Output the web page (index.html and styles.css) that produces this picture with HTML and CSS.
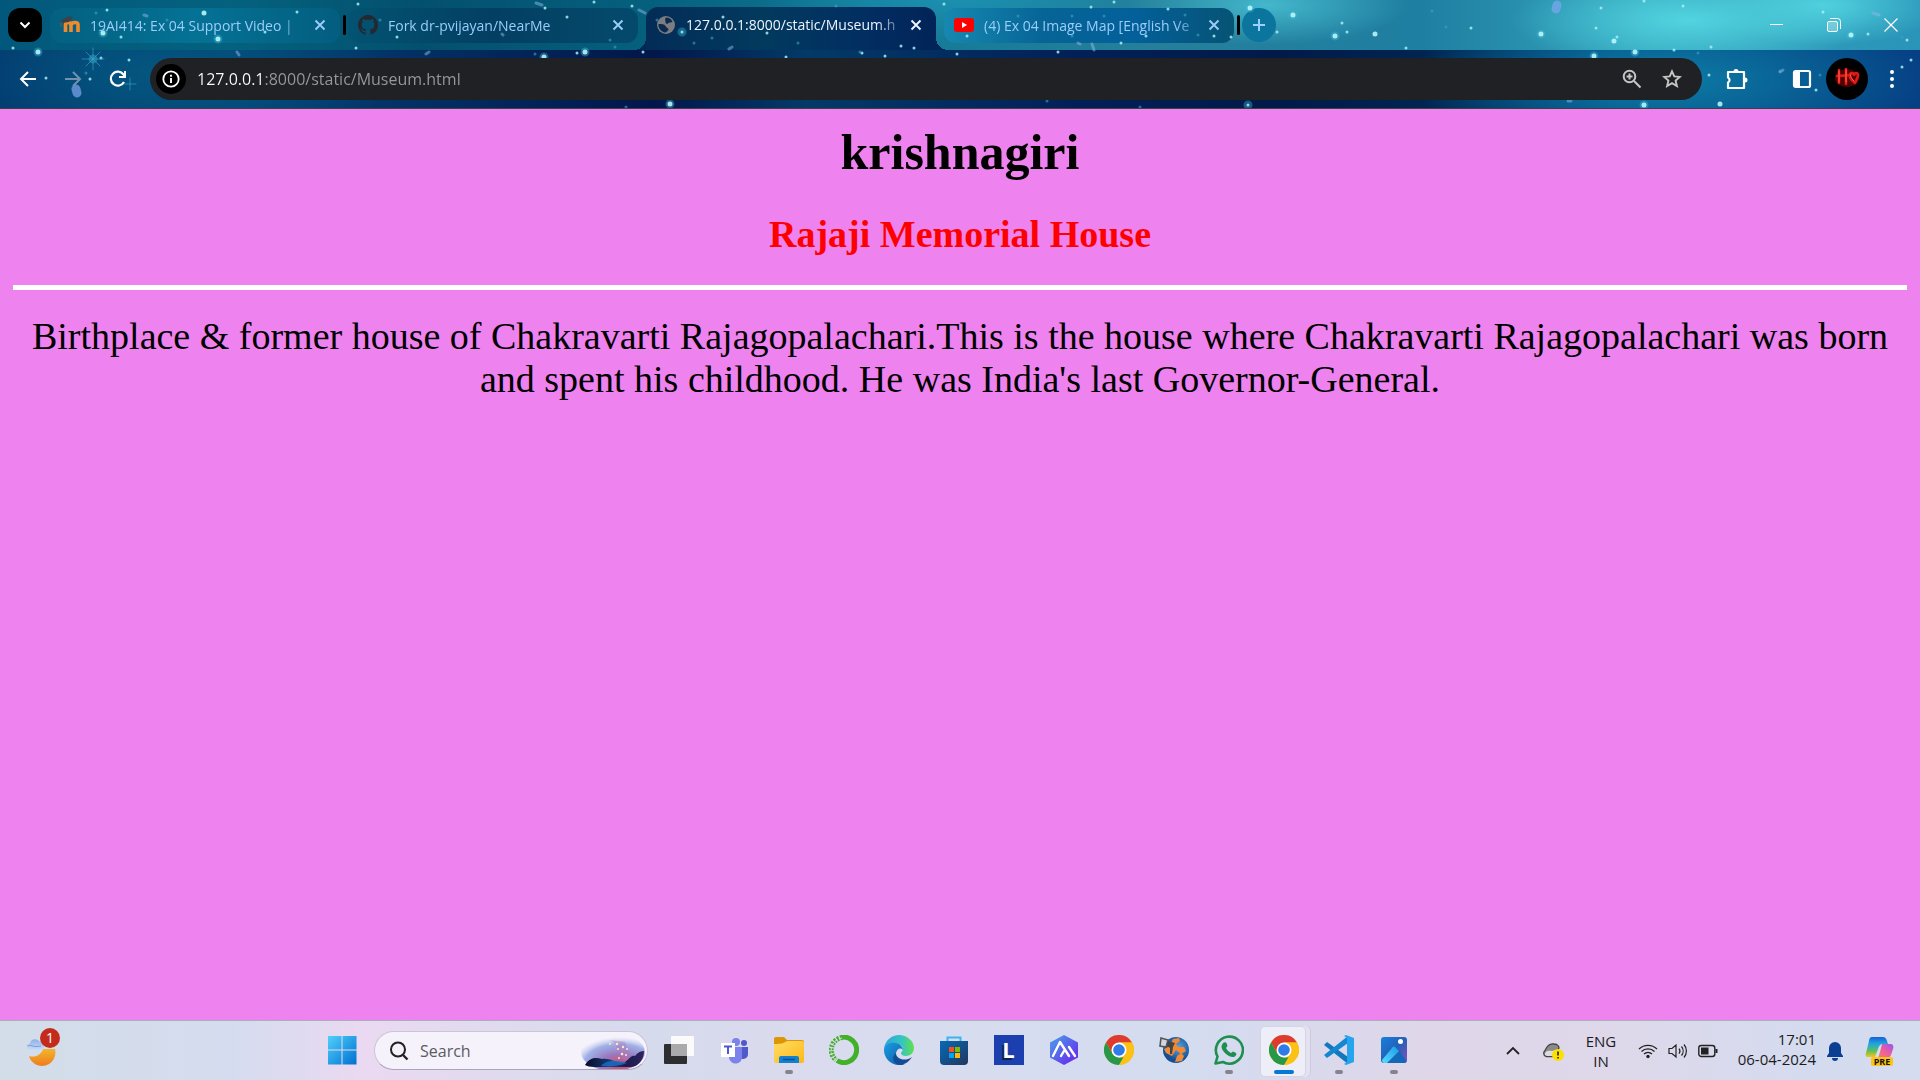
FILE: index.html
```html
<!DOCTYPE html>
<html lang="en">
<head>
<meta charset="utf-8">
<meta name="viewport" content="width=device-width, initial-scale=1">
<title>127.0.0.1:8000/static/Museum.html</title>
<link rel="stylesheet" href="styles.css">
</head>
<body>
<svg class="defs" aria-hidden="true">
  <defs>
    <linearGradient id="win" x1="0" y1="0" x2="1" y2="1"><stop offset="0" stop-color="#4fd0fb"/><stop offset="1" stop-color="#0070d0"/></linearGradient>
    <linearGradient id="moon" x1="0" y1="0" x2="0" y2="1"><stop offset="0" stop-color="#f2b52c"/><stop offset="1" stop-color="#ef7d1d"/></linearGradient>
    <linearGradient id="cloud" x1="0" y1="0" x2="0" y2="1"><stop offset="0" stop-color="#8fb0ea"/><stop offset="1" stop-color="#cfe0f8"/></linearGradient>
    <linearGradient id="folder" x1="0" y1="0" x2="1" y2="1"><stop offset="0" stop-color="#ffdc68"/><stop offset="1" stop-color="#fdb913"/></linearGradient>
    <linearGradient id="edgeA" x1="0" y1="0" x2="1" y2="0"><stop offset="0" stop-color="#2aa5dc"/><stop offset=".6" stop-color="#35c5c0"/><stop offset="1" stop-color="#62e04a"/></linearGradient>
    <linearGradient id="edgeB" x1="0" y1="0" x2="1" y2="1"><stop offset="0" stop-color="#1b9de2"/><stop offset="1" stop-color="#0c59a4"/></linearGradient>
    <linearGradient id="store" x1="0" y1="0" x2="1" y2="1"><stop offset="0" stop-color="#0669b8"/><stop offset="1" stop-color="#22375c"/></linearGradient>
    <linearGradient id="hex" x1="0" y1="0" x2="1" y2="1"><stop offset="0" stop-color="#4aa3e8"/><stop offset="1" stop-color="#6a1df0"/></linearGradient>
    <linearGradient id="photo" x1="0" y1="0" x2="1" y2="1"><stop offset="0" stop-color="#1482dc"/><stop offset=".5" stop-color="#2560b8"/><stop offset="1" stop-color="#8a4fc0"/></linearGradient>
    <linearGradient id="peak" x1="0" y1="1" x2="1" y2="0"><stop offset="0" stop-color="#58dcff"/><stop offset="1" stop-color="#1a9be8"/></linearGradient>
    <radialGradient id="globe" cx=".6" cy=".4"><stop offset="0" stop-color="#5aa5e0"/><stop offset="1" stop-color="#144f94"/></radialGradient>
    <linearGradient id="copA" x1="0" y1="0" x2="0" y2="1"><stop offset="0" stop-color="#1a5fd8"/><stop offset=".35" stop-color="#1fa8e0"/><stop offset=".7" stop-color="#5fc05a"/><stop offset="1" stop-color="#f5c518"/></linearGradient>
    <linearGradient id="copB" x1="0" y1="1" x2="1" y2="0"><stop offset="0" stop-color="#f7825a"/><stop offset=".5" stop-color="#ec5f9e"/><stop offset="1" stop-color="#9a55ee"/></linearGradient>
    <radialGradient id="dusk" cx=".6" cy=".85" r=".75"><stop offset="0" stop-color="#e0485a"/><stop offset=".4" stop-color="#9a78c0"/><stop offset=".75" stop-color="#8aa0e0" stop-opacity=".8"/><stop offset="1" stop-color="#c0c8f0" stop-opacity="0"/></radialGradient>
    <linearGradient id="hill" x1="0" y1="0" x2="1" y2="0"><stop offset="0" stop-color="#0a0a26"/><stop offset=".45" stop-color="#13407e"/><stop offset=".7" stop-color="#1a1c50"/><stop offset="1" stop-color="#30245c"/></linearGradient>
    <symbol id="chrome" viewBox="0 0 30 30">
      <circle cx="15" cy="15" r="15" fill="#fbc116"/>
      <path d="M2 7.500A15 15 0 0 1 28 7.500H15L8.500 18.750z" fill="#df3a2f"/>
      <path d="M2 7.500L8.500 18.750L15 22.500H21.500L15 30A15 15 0 0 1 2 7.500z" fill="#279847"/>
      <path d="M15 7.500H28A15 15 0 0 1 15 30L21.500 18.750z" fill="#fbc116"/>
      <circle cx="15" cy="15" r="7.500" fill="#fff"/><circle cx="15" cy="15" r="5.800" fill="#2f7be8"/>
    </symbol>
    <symbol id="cross" viewBox="0 0 14 14"><path d="M2.500 2.500l9 9M11.500 2.500l-9 9" stroke="currentColor" stroke-width="1.900" fill="none"/></symbol>
  </defs>
</svg>

<header class="browser">
  <svg class="stars" viewBox="0 0 1920 108" preserveAspectRatio="xMidYMid slice" aria-hidden="true">
    <g fill="none" stroke-linecap="round">
      <path class="glow" d="M38 52h0M103 33h0M544 57h0M585 52h0M1250 8h0M1335 36h0M1541 34h0M1614 41h0M1594 56h0M1635 52h0M1644 105h0M218 39h0M93 59h0M670 104h0M1248 105h0M1851 35h0M1293 15h0M682 32h0"/>
      <path class="star big" d="M38 52h0M103 33h0M544 57h0M585 52h0M1250 8h0M1335 36h0M1541 34h0M1614 41h0M1594 56h0M1635 52h0M1644 105h0M218 39h0M204 13h0M1293 15h0M1375 34h0M670 104h0M1851 35h0M1720 104h0"/>
      <path class="star" d="M107 10h0M297 12h0M121 37h0M13 48h0M129 60h0M101 58h0M90 79h0M46 78h0M265 32h0M356 48h0M397 37h0M358 4h0M594 2h0M545 8h0M567 17h0M632 6h0M577 53h0M643 52h0M682 32h0M723 17h0M767 33h0M786 57h0M862 53h0M901 46h0M914 48h0M885 56h0M944 4h0M957 54h0M1114 2h0M1091 7h0M1168 9h0M1277 32h0M1342 23h0M1347 32h0M1406 48h0M1214 36h0M1231 37h0M1146 36h0M1121 43h0M967 36h0M1058 52h0M1248 105h0M1471 28h0M1601 8h0M1617 37h0M1596 28h0M1644 1h0M1683 6h0M1711 47h0M1823 12h0M1868 34h0M1907 40h0M1674 50h0M1709 75h0M1816 90h0M1911 60h0M1902 67h0"/>
      <path class="star dim" d="M167 20h0M380 20h0M610 40h0M615 47h0M657 20h0M712 38h0M694 43h0M836 6h0M626 107h0M1072 16h0M1072 36h0M1185 15h0M1198 35h0M1432 11h0M1446 27h0M1698 53h0M1820 75h0M1902 37h0M1047 101h0M1140 107h0M86 73h0M1018 16h0M1104 16h0M96 13h0M1780 71h0M535 54h0M860 52h0M798 43h0"/>
      <path class="petal" d="M144 15l3 1M502 34l1 1M639 10l6 3M729 49l3-2M1092 44l2 6M1873 13l6 2M1780 72l3-2M1078 43l2 1M536 3l6 2M237 52l2 3M426 54l3-2M1568 101l3 0"/>
      <path class="petal wide" d="M76 89l1 4M1557 5l-1 4"/>
      <path class="burst" d="M93 48v22M82 59h22M86 52l14 14M100 52l-14 14M130 78v12M124 84h12"/>
    </g>
  </svg>

  <div class="tabstrip">
    <button class="tab-search" aria-label="Search tabs"><svg width="14" height="14" viewBox="0 0 14 14"><path d="M2.500 4.500L7 9l4.500-4.500" fill="none" stroke="#fff" stroke-width="2"/></svg></button>
    <div class="tab teal">
      <svg class="favicon" viewBox="0 0 20 20"><path d="M5.500 17V9.500q0-2 2.500-2t3 2V17M11.500 9.500q.5-2 3.500-2t3 2V17" fill="none" stroke="#f08a2a" stroke-width="3.600"/><path d="M0 6l9-5 4 2-4 4-7 1z" fill="#3d4248"/><path d="M1 7v5" stroke="#6b5a4a"/></svg>
      <span class="tab-title">19AI414: Ex 04 Support Video |</span>
      <button class="close" aria-label="Close tab"><svg width="14" height="14"><use href="#cross"/></svg></button>
    </div>
    <i class="divider"></i>
    <div class="tab shade">
      <svg class="favicon" viewBox="0 0 16 16"><path fill="#24292f" d="M8 0C3.580 0 0 3.580 0 8c0 3.540 2.290 6.530 5.470 7.590.4.070.55-.17.55-.38 0-.19-.01-.82-.01-1.490-2.010.37-2.530-.49-2.690-.94-.09-.23-.48-.94-.82-1.130-.28-.15-.68-.52-.01-.53.63-.01 1.080.58 1.230.82.72 1.210 1.870.87 2.330.66.070-.52.28-.87.51-1.070-1.780-.2-3.640-.89-3.640-3.950 0-.87.31-1.590.82-2.150-.08-.2-.36-1.020.08-2.120 0 0 .67-.21 2.200.82.64-.18 1.320-.27 2-.27s1.360.09 2 .27c1.530-1.040 2.200-.82 2.200-.82.44 1.100.16 1.920.08 2.120.51.56.82 1.270.82 2.150 0 3.070-1.870 3.750-3.650 3.950.29.25.54.73.54 1.480 0 1.070-.01 1.930-.01 2.200 0 .21.15.46.55.38A8.010 8.010 0 0 0 16 8c0-4.420-3.580-8-8-8z"/></svg>
      <span class="tab-title">Fork dr-pvijayan/NearMe</span>
      <button class="close" aria-label="Close tab"><svg width="14" height="14"><use href="#cross"/></svg></button>
    </div>
    <i class="divider blank"></i>
    <div class="tab active">
      <svg class="favicon" viewBox="0 0 20 20"><circle cx="10" cy="10" r="9" fill="#7b7d80"/><path d="M2.500 9c3 0 6 0 7 2s3 2 3 4c-1 1-2 2-3 2.500C5 17 2 13 2.500 9zM10 2.500c3 0 5 1.500 6.500 4-1 1.500-3 .5-4 1.500-1 1.500-3 1-3-1s-1-3 .5-4.500z" fill="#0b2a50"/></svg>
      <span class="tab-title">127.0.0.1:8000/static/Museum.h</span>
      <button class="close" aria-label="Close tab"><svg width="14" height="14"><use href="#cross"/></svg></button>
    </div>
    <i class="divider blank"></i>
    <div class="tab blue">
      <svg class="favicon" viewBox="0 0 20 20"><rect y="3" width="20" height="14" rx="3" fill="#f00"/><path d="M8 7v6l5-3z" fill="#fff"/></svg>
      <span class="tab-title">(4) Ex 04 Image Map [English Ve</span>
      <button class="close" aria-label="Close tab"><svg width="14" height="14"><use href="#cross"/></svg></button>
    </div>
    <i class="divider"></i>
    <button class="new-tab" aria-label="New tab"><svg width="14" height="14" viewBox="0 0 14 14"><path d="M7 1v12M1 7h12" stroke="#9bd0ff" stroke-width="2"/></svg></button>
    <div class="window-controls">
      <button aria-label="Minimize"><svg width="14" height="14" viewBox="0 0 14 14"><path d="M0 6.500h13" stroke="#fff"/></svg></button>
      <button aria-label="Restore"><svg width="14" height="14" viewBox="0 0 14 14"><rect x=".5" y="3.500" width="10" height="10" rx="1.500" fill="#fff" fill-opacity=".25" stroke="#fff"/><path d="M3 .5h7.500a3 3 0 0 1 3 3V11" fill="none" stroke="#fff"/></svg></button>
      <button aria-label="Close window"><svg width="14" height="14" viewBox="0 0 14 14"><path d="M.5.5l13 13M13.500.5l-13 13" stroke="#fff" stroke-width="1.200"/></svg></button>
    </div>
  </div>

  <div class="toolbar">
    <button class="nav" aria-label="Back"><svg width="18" height="18" viewBox="0 0 18 18"><path d="M17 9H2.500M9 2L2 9l7 7" fill="none" stroke="#fff" stroke-width="2"/></svg></button>
    <button class="nav" aria-label="Forward" disabled><svg width="18" height="18" viewBox="0 0 18 18"><path d="M1 9h14.500M9 2l7 7-7 7" fill="none" stroke="#7291ae" stroke-width="2"/></svg></button>
    <button class="nav" aria-label="Reload"><svg width="18" height="18" viewBox="0 0 18 18"><path d="M15 12A7 7 0 1 1 14.500 4.500L16 6.500" fill="none" stroke="#fff" stroke-width="2.200"/><path d="M17 1v7h-7V6h5V1z" fill="#fff"/></svg></button>
    <form class="omnibox">
      <button type="button" class="site-info" aria-label="View site information"><svg width="18" height="18" viewBox="0 0 18 18"><circle cx="9" cy="9" r="7.700" fill="none" stroke="#fff" stroke-width="1.800"/><path d="M9 8v5M9 4.800v2" stroke="#fff" stroke-width="1.900"/></svg></button>
      <input class="address" type="text" aria-label="Address" value="127.0.0.1:8000/static/Museum.html">
      <button type="button" class="omni-action" aria-label="Zoom"><svg width="20" height="20" viewBox="0 0 20 20"><g fill="none" stroke="#c4c7c5" stroke-width="2"><circle cx="7.500" cy="7.500" r="5.800"/><path d="M12 12l6.500 6.500M4.500 7.500h6M7.500 4.500v6"/></g></svg></button>
      <button type="button" class="omni-action" aria-label="Bookmark this tab"><svg width="20" height="20" viewBox="0 0 20 20"><path d="M10 2.300l2.300 5.100 5.500.5-4.200 3.700 1.300 5.500L10 14.200l-4.900 2.900 1.300-5.500-4.200-3.700 5.500-.5z" fill="none" stroke="#c4c7c5" stroke-width="1.900"/></svg></button>
    </form>
    <div class="actions">
      <button aria-label="Extensions"><svg width="22" height="22" viewBox="0 0 22 22"><path d="M2 4h16v16H2v-5.500a2.800 2.800 0 0 0 0-5z" fill="none" stroke="#fff" stroke-width="2.200" stroke-linejoin="round"/><path d="M7.500 3.500a2.500 2.500 0 0 1 5 0zM19 9.500a2.500 2.500 0 0 1 0 5z" fill="#fff"/></svg></button>
      <button class="panel" aria-label="Side panel"><svg width="20" height="20" viewBox="0 0 20 20"><rect x="2" y="2" width="16" height="16" rx="1.500" fill="none" stroke="#fff" stroke-width="2.200"/><path d="M2 2h6v16H2z" fill="#fff"/></svg></button>
      <button class="avatar" aria-label="Profile"><svg width="42" height="42" viewBox="0 0 42 42"><circle cx="21" cy="21" r="21" fill="#000"/><ellipse cx="21" cy="20" rx="12" ry="9" fill="#c00" opacity=".4"/><g fill="none" stroke-linecap="round" stroke-linejoin="round"><path d="M13 12v13M20 11v15M11 18l12-1M29 25c-7-5-6-10-3-10 2 0 2 1 2 2 1-3 5-2 4 1-1 3-2 5-3 7" stroke="#e01818" stroke-width="2.600"/><path d="M13 13v11M20 12v12M28 23c-4-4-4-7-3-7" stroke="#ff6a50"/></g></svg></button>
      <button class="more" aria-label="More"><svg width="6" height="20" viewBox="0 0 6 20"><g fill="#fff"><circle cx="3" cy="3" r="2"/><circle cx="3" cy="10" r="2"/><circle cx="3" cy="17" r="2"/></g></svg></button>
    </div>
  </div>
</header>

<main class="page">
  <h1>krishnagiri</h1>
  <h2>Rajaji Memorial House</h2>
  <hr>
  <p>Birthplace &amp; former house of Chakravarti Rajagopalachari.This is the house where Chakravarti Rajagopalachari was born and spent his childhood. He was India's last Governor-General.</p>
</main>

<footer class="taskbar">
  <div class="widgets">
    <button aria-label="Weather"><svg width="36" height="36" viewBox="0 0 36 36"><path d="M31 17A13 13 0 0 1 5 24c6 2 12-1 14-7z" fill="url(#moon)"/><path d="M6 19a4.500 4.500 0 0 1 0-8 5.500 5.500 0 0 1 10-1c5 0 6 9 0 9z" fill="url(#cloud)"/><path d="M3 14c4-2 6 2 14 0" fill="none" stroke="#7b9ee0"/></svg><span class="count">1</span></button>
  </div>
  <nav class="apps">
    <button aria-label="Start"><svg width="30" height="30" viewBox="0 0 30 30"><path d="M1 1h13.500v13.500H1zM15.500 1H29.500v13.500H15.500zM1 15.500h13.500v14H1zM15.500 15.500H29.500v14H15.500z" fill="url(#win)"/></svg></button>
    <label class="search">
      <svg width="20" height="20" viewBox="0 0 20 20"><circle cx="9" cy="8.500" r="7" fill="none" stroke="#222" stroke-width="2"/><path d="M14 14l4.500 4.500" stroke="#222" stroke-width="2.400"/></svg>
      <input type="search" placeholder="Search" aria-label="Search">
      <svg width="64" height="36" viewBox="0 0 64 36"><ellipse cx="32" cy="19" rx="32" ry="19" fill="url(#dusk)"/><path d="M28 7c5 1 7 4 8 10l7 10 8 1L44 9z" fill="#b07bb8" opacity=".45"/><path d="M4 32c6-9 12-7 17-6 8-1 12 3 19 4 7 0 9-9 14-7 3-4 6-5 9-5 0 8-5 16-14 16H14c-5 0-8-1-10-2z" fill="url(#hill)"/><path d="M22 31c6-4 16-4 24-1-8 3-16 4-26 3z" fill="#1b6fc8" opacity=".8"/><g fill="#ffe9c0"><circle cx="29" cy="11" r="1"/><circle cx="36" cy="11" r="1.300"/><circle cx="34" cy="5" r="1"/><circle cx="37" cy="16" r="1"/><circle cx="42" cy="14" r="1.200"/><circle cx="46" cy="16" r="1"/><circle cx="41" cy="21" r="1.300"/><circle cx="38" cy="25" r="1"/><circle cx="45" cy="22" r="1"/></g></svg>
    </label>
    <button aria-label="Task view"><svg width="30" height="30" viewBox="0 0 30 30"><rect y="9" width="23" height="20" rx="1" fill="#2e2e30"/><rect x="7" y="1" width="23" height="20" rx="1" fill="#fafafa"/><path d="M7 9h16v12H7z" fill="#aaaaac"/></svg></button>
    <button aria-label="Teams"><svg width="30" height="30" viewBox="0 0 30 30"><circle cx="17" cy="7" r="4" fill="#7b83eb"/><circle cx="25" cy="8" r="3" fill="#5059c9"/><path d="M20 12h9v7a5 5 0 0 1-9 3z" fill="#5059c9"/><path d="M10 12h13v9a6 6 0 0 1-13 2z" fill="#7b83eb"/><rect x="2" y="8" width="14" height="14" fill="#fff"/><path d="M5 11.500h8M9 11v8" stroke="#5059c9" stroke-width="2"/></svg></button>
    <button class="running" aria-label="File Explorer"><svg width="30" height="30" viewBox="0 0 30 30"><path d="M0 4a2 2 0 0 1 2-2h8l3 3h15a2 2 0 0 1 2 2v6H0z" fill="#dc9604"/><path d="M0 9c5 0 9 0 13-3h15a2 2 0 0 1 2 2v18a2 2 0 0 1-2 2H2a2 2 0 0 1-2-2z" fill="url(#folder)"/><path d="M5 28v-5a2 2 0 0 1 2-2h16a2 2 0 0 1 2 2v5z" fill="#1381d0"/><path d="M9 24.500h12" stroke="#0b4f8f" stroke-width="1.500"/></svg></button>
    <button aria-label="Anaconda"><svg width="30" height="30" viewBox="0 0 30 30"><path d="M12 2.500A12.700 12.700 0 1 1 8 25.500" fill="none" stroke="#43b02a" stroke-width="5"/><path d="M13 2.500A12.700 12.700 0 0 0 7 25" fill="none" stroke="#43b02a" stroke-width="5" stroke-dasharray="2 1.200"/><path d="M13 3A12.500 12.500 0 0 0 8 26" fill="none" stroke="#dde0ef" stroke-width="1" stroke-dasharray="3 2"/></svg></button>
    <button aria-label="Edge"><svg width="30" height="30" viewBox="0 0 30 30"><path d="M0 14C1 5 8 0 15 0c8 0 15 6 15 13 0 5-4 8-8 8-3 0-5-1-5-3 0-1 2-2 2-4C19 9 9 5 0 14z" fill="url(#edgeA)"/><path d="M0 14C2 8 8 7 12 8c4 1 7 4 7 7-3-3-6-1-7 3-1 6 4 12 9 11-2 1-4 1-6 1A15 15 0 0 1 0 14z" fill="url(#edgeB)"/><path d="M12 18c0 6 9 9 16 4-3 5-8 8-13 8-6-2-8-8-3-12z" fill="#124c94"/></svg></button>
    <button aria-label="Microsoft Store"><svg width="30" height="30" viewBox="0 0 30 30"><path d="M8.500 7V2.500h13V7" fill="none" stroke="#38b6f0" stroke-width="2"/><path d="M1 6h28v20a4 4 0 0 1-4 4H5a4 4 0 0 1-4-4z" fill="url(#store)"/><path d="M10 12h5v5h-5z" fill="#f25022"/><path d="M16 12h5v5h-5z" fill="#7fba00"/><path d="M10 18h5v5h-5z" fill="#00a4ef"/><path d="M16 18h5v5h-5z" fill="#ffb900"/></svg></button>
    <button aria-label="L"><span class="letter-app">L</span></button>
    <button aria-label="AI app"><svg width="30" height="30" viewBox="0 0 30 30"><path d="M15 0l14 7.500v15L15 30 1 22.500v-15z" fill="url(#hex)"/><path d="M4 21L11 7l9 14M12 21l3-5M20 12l6 9" fill="none" stroke="#fff" stroke-width="2.400" stroke-linejoin="round" stroke-linecap="round"/></svg></button>
    <button aria-label="Chrome"><svg width="30" height="30"><use href="#chrome"/></svg></button>
    <button aria-label="Globe app"><svg width="30" height="30" viewBox="0 0 30 30"><circle cx="17" cy="15" r="13" fill="url(#globe)"/><path d="M14 4l6-1 1 3-4 3 2 3h6l2 4-5 3-5-4-4 6-6-3-2-4 6-3zM18 21l4-3 3 3-2 5-7 1z" fill="#f08a35"/><path d="M2 3l7 2-2 7-6-1z" fill="#d5d5e0" stroke="#555" stroke-width="1.600"/><path d="M9 6l7 2-2 4-1 7h-2V13L8 11z" fill="#444"/></svg></button>
    <button class="running" aria-label="WhatsApp"><svg width="30" height="30" viewBox="0 0 30 30"><path d="M1.500 28.500l2-7A13.500 13.500 0 1 1 9 27z" fill="none" stroke="#1e8f50" stroke-width="2.600" stroke-linejoin="round"/><path d="M9 8c1-1 3-1 3.500 0l1 3-1.500 2c1 2 3 4 5 5l2-1.500 3 1.500c1 1 0 3-2 4-5 1-13-6-12.500-11z" fill="#1e8f50"/></svg></button>
    <button class="running current" aria-label="Chrome window"><svg width="30" height="30"><use href="#chrome"/></svg></button>
    <button class="running" aria-label="Visual Studio Code"><svg width="30" height="30" viewBox="0 0 30 30"><path d="M0 10l3-3L24 22v7z" fill="#1178bd"/><path d="M0 20l3 3L24 8V1z" fill="#1587d0"/><path d="M22 0l8 3v24l-8 3-2-1 3-2V3l-3-2z" fill="#25a5ee"/></svg></button>
    <button class="running" aria-label="Photos"><svg width="30" height="30" viewBox="0 0 30 30"><rect x="2" y="2" width="26" height="26" rx="3" fill="url(#photo)"/><path d="M4 28L14 14l4-1 9 12c1 2 0 3-2 3z" fill="#1468b8"/><path d="M3 25l10-12c1-2 3-2 4 0l3 3-12 12H5c-1 0-2-1-2-3z" fill="url(#peak)"/><circle cx="21.500" cy="6.500" r="2.500" fill="#fff"/></svg></button>
  </nav>
  <div class="tray">
    <button class="t-chevron" aria-label="Show hidden icons"><svg width="14" height="10" viewBox="0 0 14 10"><path d="M1 8l6-6 6 6" fill="none" stroke="#222" stroke-width="1.800"/></svg></button>
    <button class="t-cloud" aria-label="OneDrive"><svg width="22" height="20" viewBox="0 0 22 20"><path d="M4 15.500a3.500 3.500 0 0 1-1-6C5 5 8 2 12 3c3 0 5 2 5 4l-6 8.500z" fill="#8a8a8a" stroke="#444" stroke-width="1.300"/><path d="M3 14c-1-4 4-5 7-4l3-1-2 6H5z" fill="#dcdcdc"/><circle cx="16" cy="14" r="6" fill="#fbe000"/><path d="M16 10.500v4M16 16v1.500" stroke="#222" stroke-width="1.600"/></svg></button>
    <button class="t-lang" aria-label="Input language">ENG<br>IN</button>
    <button class="t-status" aria-label="Network, volume and battery">
      <svg width="20" height="16" viewBox="0 0 20 16"><g fill="none" stroke="#222" stroke-width="1.300"><path d="M1 6a13 13 0 0 1 18 0M3.500 8.500a9.500 9.500 0 0 1 13 0M6 11a6 6 0 0 1 8 0"/></g><circle cx="10" cy="13.500" r="1.700" fill="#222"/></svg>
      <svg width="20" height="16" viewBox="0 0 20 16"><path d="M1 5.500h3L8 2v12L4 10.500H1zM11 5.500a4 4 0 0 1 0 5M13.500 3.500a7 7 0 0 1 0 9M16 1.500a10 10 0 0 1 0 13" fill="none" stroke="#222" stroke-width="1.200"/></svg>
      <svg width="20" height="16" viewBox="0 0 20 16"><rect x=".8" y="2.500" width="16" height="11" rx="2.500" fill="none" stroke="#222" stroke-width="1.400"/><rect x="3" y="4.500" width="7.500" height="7" fill="#222"/><path d="M18.500 6v4" stroke="#222" stroke-width="2"/></svg>
    </button>
    <button class="t-clock"><time datetime="2024-04-06T17:01">17:01<br>06-04-2024</time></button>
    <button class="t-bell" aria-label="Notifications"><svg width="18" height="20" viewBox="0 0 18 20"><path d="M9 1a6 6 0 0 1 6 6v5l2 3v1H1v-1l2-3V7a6 6 0 0 1 6-6zM6 17h6a3 3 0 0 1-6 0z" fill="#0a3f92"/></svg></button>
    <button class="t-copilot" aria-label="Copilot preview"><svg width="30" height="30" viewBox="0 0 30 30"><path d="M7 1h11c2 0 3 1 4 4l1 3h-5c-3 0-4 2-5 5l-3 8H3c-2 0-3-1-2-4L4 5c0-2 1-4 3-4z" fill="url(#copA)"/><path d="M17 8h8c3 0 4 2 3 5l-2 6c-1 2-2 3-4 3H11c3 0 3-3 4-6z" fill="url(#copB)"/></svg><span class="pre">PRE</span></button>
  </div>
</footer>
</body>
</html>
```
FILE: styles.css
```css
* { box-sizing: border-box; }

body {
  margin: 0;
  min-height: 100vh;
  display: flex;
  flex-direction: column;
  font-family: "Open Sans", "Noto Sans", sans-serif;
}

button, input {
  margin: 0;
  padding: 0;
  border: 0;
  background: none;
  color: inherit;
  font: inherit;
}

button {
  display: flex;
  align-items: center;
  justify-content: center;
}

svg { display: block; flex: none; }

.defs { position: absolute; width: 0; height: 0; }

/* Browser frame */
.browser {
  position: relative;
  isolation: isolate;
  border-bottom: 1px solid #3d4146;
}

.stars {
  position: absolute;
  inset: 0;
  width: 100%;
  height: 100%;
  z-index: 1;
  pointer-events: none;
}

.star { stroke: #a5f0f4; stroke-width: 3; opacity: .85; }
.star.big { stroke: #c4faf8; stroke-width: 5; }
.star.dim { stroke: #3aa5c4; stroke-width: 3; opacity: .6; }
.glow { stroke: #38b8dc; stroke-width: 9; opacity: .4; }
.petal { stroke: #8fb5e8; stroke-width: 3; opacity: .5; }
.petal.wide { stroke: #7fa5f0; stroke-width: 9; opacity: .7; }
.burst { stroke: #3fa8c8; stroke-width: 1; opacity: .6; }

.tabstrip {
  display: flex;
  align-items: center;
  height: 50px;
  padding: 0 8px;
  color: #9bcdfa;
  font-size: 14px;
  background:
    radial-gradient(ellipse 180px 50px at 88% 40%, #52d4e0 0%, transparent 100%),
    radial-gradient(ellipse 120px 40px at 95% 10%, #4fd0de 0%, transparent 100%),
    radial-gradient(ellipse 140px 40px at 66% 10%, #44b8cc 0%, transparent 100%),
    radial-gradient(ellipse 200px 40px at 50% 0%, #1c90b0 0%, transparent 100%),
    linear-gradient(90deg, #02587c 0%, #04627e 12%, #03506e 22%, #05607e 34%, #127a98 46%, #257f9a 60%, #1f7fa2 74%, #34a4bc 86%, #2a94b8 100%);
}

.tab-search {
  flex: none;
  width: 34px;
  height: 34px;
  margin-right: 8px;
  border-radius: 12px;
  background: #000;
}

.tab {
  flex: 0 1 290px;
  min-width: 0;
  height: 35px;
  display: flex;
  align-items: center;
  gap: 10px;
  padding: 0 13px 0 10px;
  border-radius: 12px;
}

.teal { background: linear-gradient(90deg, #046080, #047295 50%, #035e80); }
.shade { background: linear-gradient(90deg, #035372, #033f62 50%, #044a6c); }
.blue { background: linear-gradient(90deg, #1688b0, #066496 35%, #03609a 65%, #065374); }

.tab.active {
  position: relative;
  align-self: flex-end;
  height: 43px;
  padding-bottom: 8px;
  border-radius: 12px 12px 0 0;
  color: #eef4fc;
  background: linear-gradient(90deg, #032c56, #023a5e 40%, #022e62 75%, #022458);
}

/* The curved feet that join the active tab to the toolbar */
.active::before,
.active::after {
  content: "";
  position: absolute;
  bottom: 0;
  width: 12px;
  height: 12px;
}
.active::before { right: 100%; background: radial-gradient(circle at 0 0, transparent 12px, #022854 12px); }
.active::after { left: 100%; background: radial-gradient(circle at 100% 0, transparent 12px, #022458 12px); }

/* Tab contents stay above the star field */
.favicon, .tab-title, .close { position: relative; z-index: 2; }

.favicon { width: 20px; height: 20px; }

.tab-title {
  flex: 1;
  overflow: hidden;
  white-space: nowrap;
  -webkit-mask-image: linear-gradient(90deg, #000 190px, transparent 222px);
  mask-image: linear-gradient(90deg, #000 190px, transparent 222px);
}

.close { flex: none; }

.divider {
  flex: none;
  width: 3px;
  height: 20px;
  margin: 0 2px 0 3px;
  border-radius: 2px;
  background: #000;
}
.divider.blank { visibility: hidden; }

.new-tab {
  flex: none;
  width: 34px;
  height: 34px;
  border-radius: 50%;
  background: #0b759d;
}

.window-controls { display: flex; margin-left: auto; }
.window-controls button { width: 57px; height: 48px; }
.window-controls button:last-child { width: 42px; padding-left: 15px; margin-right: 8px; }

.toolbar {
  display: flex;
  align-items: center;
  height: 58px;
  padding-left: 5px;
  background:
    radial-gradient(ellipse 240px 90px at 8% 40%, #04567f 0%, transparent 100%),
    radial-gradient(ellipse 260px 80px at 87% 50%, #0d7ba6 0%, transparent 100%),
    linear-gradient(90deg, #03346c 0%, #044478 12%, #02164a 34%, #033a68 42%, #022058 56%, #011a48 66%, #012450 74%, #034a80 84%, #063f84 100%);
}

.nav { position: relative; z-index: 2; width: 45px; height: 42px; flex: none; }

.omnibox {
  position: relative;
  z-index: 2;
  flex: 1;
  display: flex;
  align-items: center;
  height: 42px;
  margin-left: 10px;
  padding: 0 10px 0 6px;
  border-radius: 21px;
  background: #202124;
}

.site-info {
  flex: none;
  width: 30px;
  height: 30px;
  border-radius: 50%;
  background: #000;
}

.address {
  flex: 1;
  min-width: 0;
  height: 42px;
  margin-left: 11px;
  font-size: 16px;
  outline: 0;
  background: linear-gradient(90deg, #fff 65px, #96999d 65px);
  -webkit-background-clip: text;
  background-clip: text;
  -webkit-text-fill-color: transparent;
}

.omni-action { width: 40px; height: 40px; flex: none; }

.actions {
  position: relative;
  z-index: 2;
  flex: none;
  display: flex;
  align-items: center;
  padding: 0 12px 0 14px;
}
.actions button { width: 42px; height: 42px; }
.actions .panel { width: 68px; padding-left: 20px; }
.actions .more { width: 40px; padding-left: 8px; }

/* Page content */
.page {
  flex: 1;
  padding: 14px 13px 0;
  background: #ee82ee;
  color: #000;
  font-family: "Liberation Serif", "Times New Roman", serif;
  font-size: 38px;
  line-height: 43px;
  text-align: center;
}

.page h1 { margin: 0 0 31px; font-size: 50px; line-height: 58px; }
.page h2 { margin: 0 0 29px; font-size: 38px; line-height: 44px; color: #f00; }
.page hr { height: 5px; margin: 0 0 25px; border: 0; background: #fff; }
.page p { margin: 0; }

/* Taskbar */
.taskbar {
  display: flex;
  height: 60px;
  border-top: 1px solid #a9aebb;
  background: linear-gradient(90deg, #d3dde8 0%, #d5dcef 12%, #ead9f1 19%, #e6daf0 22%, #d5dbec 34%, #dadaed 40%, #d8dcef 48%, #d4dcf0 62%, #dfd6e9 74%, #ded8ea 84%, #d5dbef 94%, #d6dcf0 100%);
  color: #1c1c1e;
}

.widgets { flex: 0 1 314px; display: flex; padding-left: 24px; }
.widgets button { position: relative; width: 36px; height: 58px; }
.count {
  position: absolute;
  top: 7px;
  right: 0;
  width: 20px;
  height: 20px;
  border-radius: 50%;
  background: #c42b1c;
  color: #fff;
  font-size: 14px;
  line-height: 20px;
}

.apps { display: flex; flex: none; }
.apps button { position: relative; width: 55px; height: 58px; }

.search {
  display: flex;
  align-items: center;
  width: 274px;
  height: 39px;
  margin: 10px 3px 0 5px;
  padding: 0 2px 0 14px;
  border: 1px solid #cbc5da;
  border-bottom-color: #aaa5bc;
  border-radius: 20px;
  background: #f5f2fb;
}
.search input {
  flex: 1;
  min-width: 0;
  padding-left: 11px;
  font-size: 16px;
}
.search input::placeholder { color: #5c5b62; opacity: 1; }

.running::after {
  content: "";
  position: absolute;
  bottom: 5px;
  left: 24px;
  width: 8px;
  height: 4px;
  border-radius: 2px;
  background: #85838d;
}
.current::before {
  content: "";
  position: absolute;
  z-index: -1;
  top: 5px;
  left: 4px;
  width: 44px;
  height: 49px;
  border: 1px solid #d6d4e4;
  border-radius: 5px;
  background: #eeeef8;
  box-shadow: 4px 0 0 #e4e2f0, 5px 0 0 #cdcbdc;
}
.current { z-index: 0; }
.current::after { left: 18px; width: 20px; background: #0677d4; }

.letter-app {
  width: 30px;
  height: 30px;
  background: #1c3fb0;
  color: #fff;
  font-size: 22px;
  font-weight: 700;
  line-height: 28px;
  text-shadow: -2px 2px 0 #0d2348;
}

.tray {
  display: flex;
  align-items: center;
  flex: none;
  margin-left: auto;
  padding-right: 16px;
  font-size: 15px;
  line-height: 20px;
}
.tray button { height: 58px; }
.t-chevron { width: 32px; }
.t-cloud { width: 48px; }
.t-lang { width: 48px; }
.t-status { gap: 10px; width: 106px; }
.tray .t-clock { width: 85px; padding-bottom: 4px; justify-content: flex-end; text-align: right; }
.t-bell { width: 38px; }
.tray .t-copilot { position: relative; width: 48px; margin-left: 2px; }
.pre {
  position: absolute;
  left: 15px;
  bottom: 14px;
  width: 22px;
  height: 9px;
  border-radius: 2px;
  background: #fcc419;
  color: #111;
  font-size: 9px;
  font-weight: 700;
  line-height: 9px;
}
```
